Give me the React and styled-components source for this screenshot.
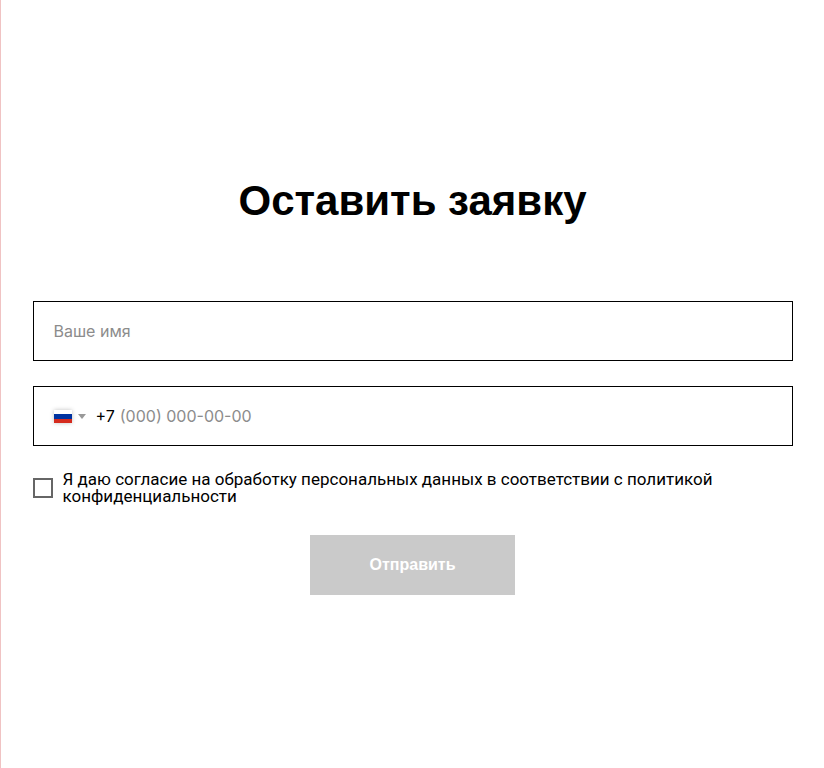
import React, { useState } from "react";
import styled, { createGlobalStyle } from "styled-components";

const GlobalStyle = createGlobalStyle`
  *,
  *::before,
  *::after {
    box-sizing: border-box;
  }

  body {
    margin: 0;
    background: #fff;
    color: #000;
    font-family: Inter, "Liberation Sans", sans-serif;
  }

  button,
  input {
    font-family: inherit;
  }
`;

const RussianFlag = () => (
  <Flag viewBox='0 0 18 13' aria-hidden='true'>
    <rect width='18' height='13' fill='#fff' />
    <rect y='4' width='18' height='5' fill='#0033a0' />
    <rect y='9' width='18' height='4' fill='#d52b1e' />
  </Flag>
);

const App = () => {
  const [agreed, setAgreed] = useState(false);

  return (
    <>
      <GlobalStyle />
      <Page>
        <Title>Оставить заявку</Title>
        <Form onSubmit={(e) => e.preventDefault()}>
          <Field>
            <Input
              type='text'
              name='name'
              placeholder='Ваше имя'
              aria-label='Ваше имя'
            />
          </Field>
          <Field>
            <CountryButton type='button' aria-label='Выбрать страну'>
              <RussianFlag />
              <Caret />
            </CountryButton>
            <DialCode htmlFor='phone'>+7</DialCode>
            <Input
              id='phone'
              type='tel'
              name='phone'
              placeholder='(000) 000-00-00'
            />
          </Field>
          <Consent>
            <Checkbox
              type='checkbox'
              checked={agreed}
              onChange={(e) => setAgreed(e.target.checked)}
            />
            <span>
              Я даю согласие на обработку персональных данных в соответствии с
              политикой конфиденциальности
            </span>
          </Consent>
          <SubmitButton type='submit' disabled={!agreed}>
            Отправить
          </SubmitButton>
        </Form>
      </Page>
    </>
  );
};

const Page = styled.main`
  min-height: 100vh;
  padding: 172px 20px 60px;
  border-left: 1px solid #f0c3c3;
`;

const Title = styled.h2`
  margin: 0 0 72px;
  font-family: "Liberation Sans", sans-serif;
  font-size: 42px;
  line-height: 57px;
  font-weight: 700;
  text-align: center;
`;

const Form = styled.form`
  display: flex;
  flex-direction: column;
  gap: 25px;
  max-width: 760px;
  margin: 0 auto;
`;

const Field = styled.div`
  display: flex;
  align-items: center;
  height: 60px;
  padding: 0 20px;
  border: 1px solid #000;
`;

const Input = styled.input`
  flex: 1;
  min-width: 0;
  height: 100%;
  padding: 0;
  border: 0;
  outline: none;
  background: transparent;
  color: #000;
  font-size: 16px;

  &::placeholder {
    color: #8c8c8c;
    opacity: 1;
  }
`;

const CountryButton = styled.button`
  display: flex;
  align-items: center;
  gap: 6px;
  margin-right: 10px;
  padding: 0;
  border: 0;
  background: transparent;
  cursor: pointer;
`;

const Flag = styled.svg`
  width: 18px;
  height: 13px;
  box-shadow: 0 0 4px rgba(0, 0, 0, 0.25);
`;

const Caret = styled.span`
  border: 4px solid transparent;
  border-top: 5px solid #999;
  border-bottom: 0;
`;

const DialCode = styled.label`
  margin-right: 5px;
  font-size: 16px;
`;

const Consent = styled.label`
  display: flex;
  align-items: center;
  gap: 10px;
  margin-bottom: 5px;
  font-family: Roboto, "Liberation Sans", sans-serif;
  font-size: 17px;
  line-height: 17px;
  cursor: pointer;
`;

const Checkbox = styled.input`
  flex-shrink: 0;
  appearance: none;
  width: 20px;
  height: 20px;
  margin: 0;
  border: 2px solid #666;
  background: #fff;

  &:checked {
    background: #666;
    box-shadow: inset 0 0 0 3px #fff;
  }
`;

const SubmitButton = styled.button`
  align-self: center;
  height: 60px;
  padding: 0 60px;
  border: 0;
  background: #000;
  color: #fff;
  font-family: "Liberation Sans", sans-serif;
  font-size: 16px;
  font-weight: 700;
  cursor: pointer;

  &:disabled {
    background: #cacaca;
    cursor: default;
  }
`;

export default App;
